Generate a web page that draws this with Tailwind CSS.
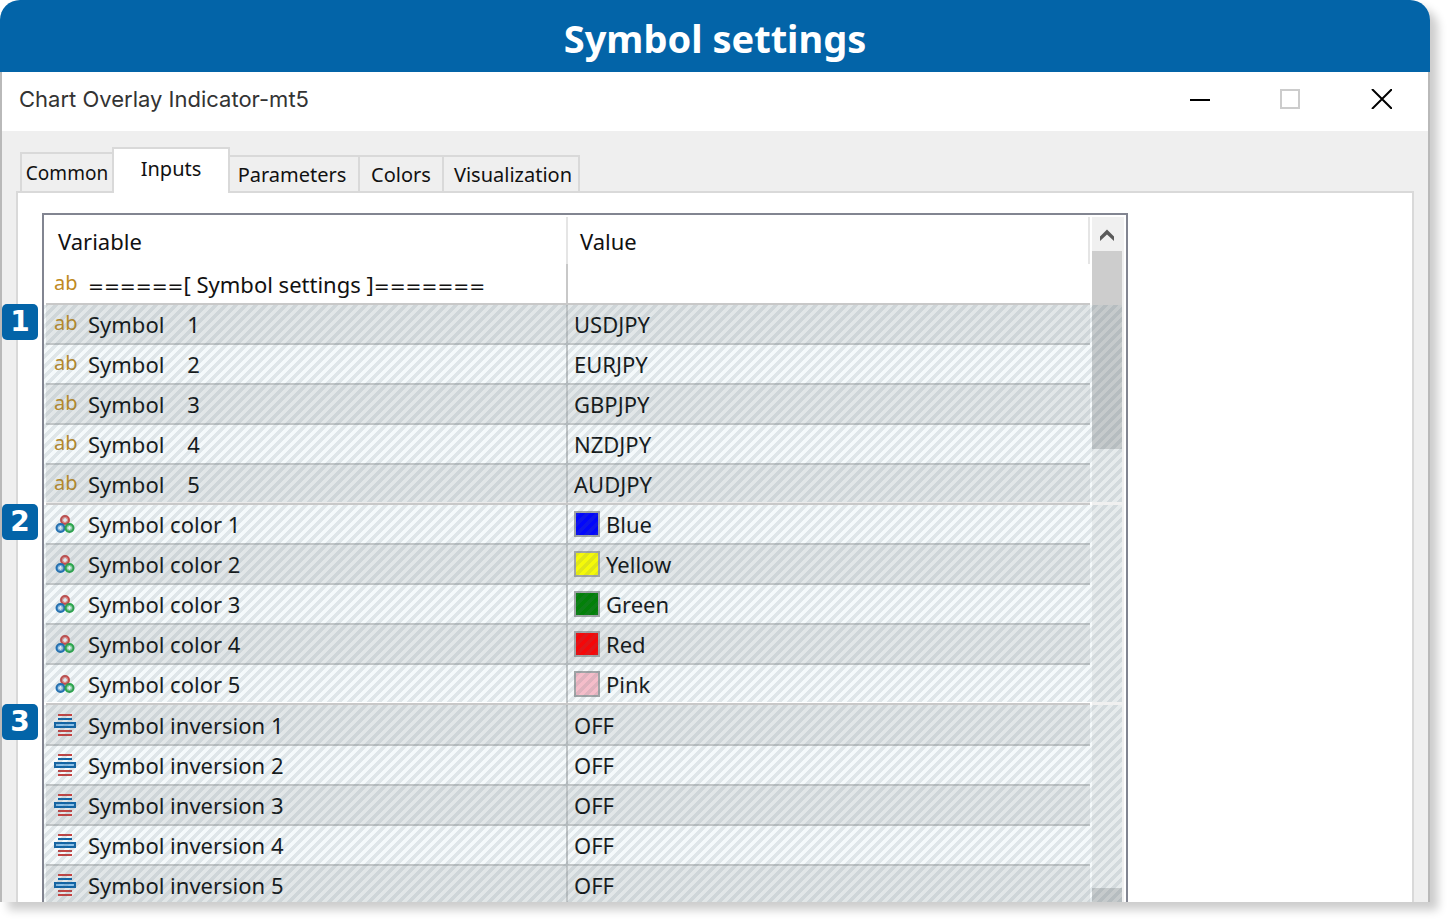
<!DOCTYPE html>
<html lang="en">
<head>
    <meta charset="UTF-8">
    <meta name="viewport" content="width=device-width, initial-scale=1.0">
    <title>Symbol settings</title>
    <script src="https://cdn.jsdelivr.net/npm/@tailwindcss/browser@4"></script>
</head>
<body class="bg-white overflow-hidden font-['Noto_Sans',sans-serif] text-[#111]">
    <div class="h-screen pr-5 pb-5">
        <div class="h-full flex flex-col rounded-t-[20px] overflow-hidden shadow-[8px_8px_10px_rgba(0,0,0,0.2)]">
            <h1 class="h-[72px] shrink-0 bg-[#0364a8] text-white text-center font-bold text-[38px] leading-[76px]">Symbol settings</h1>

            <div class="flex-1 min-h-0 flex flex-col border-x-2 border-[#b9b9b9] bg-[#efefef]">
                <!-- Title bar -->
                <div class="h-[59px] shrink-0 bg-white flex items-center justify-between pl-[17px] pr-9 pb-[5px]">
                    <span class="text-[22px] text-[#333] font-['Inter',sans-serif]">Chart Overlay Indicator-mt5</span>
                    <div class="flex items-center gap-[70px]">
                        <button type="button" aria-label="Minimize"><svg width="20" height="20" class="block"><path d="M0 11h20" stroke="#000" stroke-width="2"/></svg></button>
                        <button type="button" aria-label="Maximize"><svg width="20" height="20" class="block"><path d="M1 1h18v18H1z" fill="none" stroke="#ccc" stroke-width="2"/></svg></button>
                        <button type="button" aria-label="Close"><svg width="22" height="20" class="block"><path d="M2 0l20 20M22 0L2 20" stroke="#000" stroke-width="2"/></svg></button>
                    </div>
                </div>

                <!-- Tabs -->
                <div role="tablist" class="h-[60px] shrink-0 flex items-end pl-[18px] text-[20px] leading-6">
                    <button type="button" role="tab" class="w-[92px] h-[39px] border-t-2 border-l-2 border-[#d9d9d9] text-[19px]">Common</button>
                    <button type="button" role="tab" aria-selected="true" class="relative z-10 w-[118px] h-[46px] -mb-0.5 pb-1 bg-white border-2 border-b-0 border-[#d9d9d9]">Inputs</button>
                    <button type="button" role="tab" class="w-[130px] h-9 pt-0.5 pr-1 border-t-2 border-r-2 border-[#d9d9d9]">Parameters</button>
                    <button type="button" role="tab" class="w-[84px] h-9 pt-0.5 border-t-2 border-r-2 border-[#d9d9d9]">Colors</button>
                    <button type="button" role="tab" class="w-[136px] h-9 pt-0.5 pl-1 border-t-2 border-r-2 border-[#d9d9d9]">Visualization</button>
                </div>

                <!-- Inputs panel -->
                <div role="tabpanel" class="flex-1 min-h-0 mx-3.5 bg-white border-2 border-b-0 border-[#d9d9d9] pt-5 pl-6 pr-[284px]">
                    <div class="relative flex border-2 border-b-0 border-[#828591] pl-0.5 pr-0.5">
                        <table class="flex-1 table-fixed border-separate border-spacing-0 text-left text-[22px] leading-7">
                            <thead>
                                <tr class="h-[49px]">
                                    <th class="relative w-1/2 p-0 pl-3 pt-0.5 font-normal">Variable<span class="absolute right-0 top-0.5 bottom-0 w-0.5 bg-[#e5e5e5]"></span></th>
                                    <th class="relative p-0 pl-3 pt-0.5 font-normal">Value<span class="absolute right-0 top-0.5 bottom-0 w-0.5 bg-[#e5e5e5]"></span></th>
                                </tr>
                            </thead>
                            <tbody id="inputRows"></tbody>
                        </table>

                        <!-- Scrollbar -->
                        <div class="w-8 ml-0.5 mt-0.5 shrink-0 flex flex-col bg-[#f0f0f0]">
                            <button type="button" aria-label="Scroll up" class="h-[34px] flex justify-center items-center pt-0.5 pr-0.5"><svg width="14" height="14" viewBox="0 0 14 14"><path d="M0 13V8.500L7 1.500l7 7V13L7 6.500z" fill="#5a5a5a"/></svg></button>
                            <div class="h-[198px] mr-0.5 bg-[#cdcdcd]"></div>
                            <div class="h-[439px]"></div>
                            <div class="flex-1 mr-0.5 bg-[#cdcdcd]"></div>
                        </div>

                        <!-- Hatching over the three groups of rows -->
                        <div class="absolute left-0 right-1 top-[90px] bottom-0 flex flex-col gap-[3px] pointer-events-none">
                            <div class="h-[197px] bg-[linear-gradient(135deg,rgba(78,116,133,0.18)_25%,rgba(50,140,170,0.05)_25%,rgba(50,140,170,0.05)_50%,rgba(78,116,133,0.18)_50%,rgba(78,116,133,0.18)_75%,rgba(50,140,170,0.05)_75%)] bg-[length:10px_10px]"></div>
                            <div class="h-[197px] bg-[linear-gradient(135deg,rgba(78,116,133,0.18)_25%,rgba(50,140,170,0.05)_25%,rgba(50,140,170,0.05)_50%,rgba(78,116,133,0.18)_50%,rgba(78,116,133,0.18)_75%,rgba(50,140,170,0.05)_75%)] bg-[length:10px_10px]"></div>
                            <div class="flex-1 bg-[linear-gradient(135deg,rgba(78,116,133,0.18)_25%,rgba(50,140,170,0.05)_25%,rgba(50,140,170,0.05)_50%,rgba(78,116,133,0.18)_50%,rgba(78,116,133,0.18)_75%,rgba(50,140,170,0.05)_75%)] bg-[length:10px_10px]"></div>
                        </div>
                    </div>
                </div>
            </div>
        </div>
    </div>

    <script>
        const icons = {
            text: '<span class="w-[22px] text-[20px] leading-6 pb-0.5 text-[#bf8a22]">ab</span>',
            color: `<svg width="22" height="18" viewBox="-2 0 22 18">
                <g stroke-width="2">
                    <circle cx="9" cy="5" r="4" stroke="#cf4a47" fill="#e99c98"/>
                    <circle cx="4.500" cy="13" r="4" stroke="#1d6fb5" fill="#7fb2dd"/>
                    <circle cx="13.500" cy="13" r="4" stroke="#28a745" fill="#7fd08f"/>
                </g>
                <path d="M9 3v4M7 5h4M4.500 11v4M2.500 13h4M13.500 11v4M11.500 13h4" stroke="#e8f4fa" stroke-width="1.500"/>
            </svg>`,
            bool: `<svg width="22" height="22" viewBox="0 0 22 22">
                <path d="M4 0h14v2H4zM4 16h14v2H4zM4 20h14v2H4z" fill="#cb403d"/>
                <path d="M4 4h14v2H4zM0 8h22v6H0z" fill="#0f63a6"/>
                <path d="M2 10h18v2H2z" fill="#8fc3ec"/>
            </svg>`
        };

        const rows = [
            { icon: 'text', name: `<span class="text-[19px] leading-4 font-['DejaVu_Sans',sans-serif]">======</span>[ Symbol settings ]<span class="text-[19px] leading-4 font-['DejaVu_Sans',sans-serif]">=======</span>`, value: '' },
            { icon: 'text', name: 'Symbol    1', value: 'USDJPY', badge: 1 },
            { icon: 'text', name: 'Symbol    2', value: 'EURJPY' },
            { icon: 'text', name: 'Symbol    3', value: 'GBPJPY' },
            { icon: 'text', name: 'Symbol    4', value: 'NZDJPY' },
            { icon: 'text', name: 'Symbol    5', value: 'AUDJPY' },
            { icon: 'color', name: 'Symbol color 1', value: 'Blue', swatch: 'bg-[#0000ff]', badge: 2 },
            { icon: 'color', name: 'Symbol color 2', value: 'Yellow', swatch: 'bg-[#ffff00]' },
            { icon: 'color', name: 'Symbol color 3', value: 'Green', swatch: 'bg-[#008000]' },
            { icon: 'color', name: 'Symbol color 4', value: 'Red', swatch: 'bg-[#ff0000]' },
            { icon: 'color', name: 'Symbol color 5', value: 'Pink', swatch: 'bg-[#ffc0cb]' },
            { icon: 'bool', name: 'Symbol inversion 1', value: 'OFF', badge: 3 },
            { icon: 'bool', name: 'Symbol inversion 2', value: 'OFF' },
            { icon: 'bool', name: 'Symbol inversion 3', value: 'OFF' },
            { icon: 'bool', name: 'Symbol inversion 4', value: 'OFF' },
            { icon: 'bool', name: 'Symbol inversion 5', value: 'OFF' }
        ];

        document.getElementById('inputRows').innerHTML = rows.map((row, i) => `
            <tr class="${i === 0 || row.value === 'OFF' && row.badge ? 'h-[41px]' : 'h-10'} ${i % 2 ? 'bg-[#ebebeb]' : 'bg-white'}">
                <td class="relative p-0 border-b-2 border-r-2 border-[#c8c8c8]">
                    ${row.badge ? `<span class="absolute -left-11 -top-px size-9 rounded-[5px] bg-[#0364a8] text-white text-center font-bold text-[28px] leading-9 font-['DejaVu_Sans',sans-serif]">${row.badge}</span>` : ''}
                    <div class="flex items-center gap-3 pl-2 h-7">${icons[row.icon]}<span class="whitespace-pre">${row.name}</span></div>
                </td>
                <td class="p-0 border-b-2 border-[#c8c8c8]">
                    <div class="flex items-center gap-1.5 pl-1.5 h-7">${row.swatch ? `<span class="size-[26px] border-2 border-[#a8a8a8] ${row.swatch}"></span>` : ''}${row.value}</div>
                </td>
            </tr>
        `).join('');
    </script>
</body>
</html>
